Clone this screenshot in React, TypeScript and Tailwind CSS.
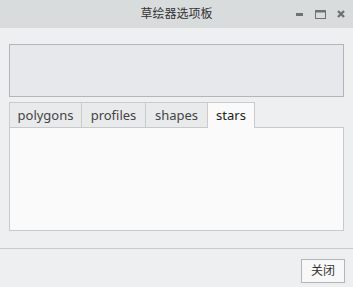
import React from "react";

const font = { fontFamily: '"Noto Sans", "Noto Sans CJK SC", sans-serif' };

export default function App() {
  const tabs = ["polygons", "profiles", "shapes", "stars"];
  return (
    <div className="w-[353px] h-[287px] flex flex-col bg-[#eeeff1] text-[#333]" style={font}>
      <div className="relative h-[28px] bg-[#d9dcdd] flex items-center justify-center shrink-0">
        <span className="text-[12px] text-[#333]">草绘器选项板</span>
        <div className="absolute right-[8px] top-0 h-[28px] flex items-center gap-[11px]">
          <svg width="8" height="9" viewBox="0 0 8 9">
            <rect x="0" y="3" width="7" height="3" fill="#6f7274" />
          </svg>
          <svg width="11" height="9" viewBox="0 0 11 9">
            <rect x="0.5" y="0.5" width="10" height="8" fill="none" stroke="#6f7274" />
            <rect x="0.5" y="0.5" width="10" height="2" fill="#6f7274" />
          </svg>
          <svg width="8" height="8" viewBox="0 0 8 8">
            <path d="M1 1 L7 7 M7 1 L1 7" stroke="#6f7274" strokeWidth="2.4" />
          </svg>
        </div>
      </div>
      <div className="flex flex-col px-[9px] pt-[16px]">
        <div className="h-[53px] border border-[#b4b5b7] bg-[#e7e8eb]" />
        <div className="flex mt-[5px] h-[25px]">
          {tabs.map((t, i) => {
            const active = i === 3;
            const w = [73, 64, 62, 47][i];
            return (
              <div
                key={t}
                style={{ width: w }}
                className={
                  "flex items-center justify-center pt-[1px] text-[13px] border-t border-r border-[#cbcbcb] " +
                  (i === 0 ? "border-l " : "") +
                  (active ? "bg-[#fafafa] text-[#222] h-[26px] -mb-[1px] z-10" : "bg-[#e9eaec] text-[#444]")
                }
              >
                {t}
              </div>
            );
          })}
        </div>
        <div className="h-[104px] border border-[#c8c9ca] bg-[#fafafa]" />
      </div>
      <div className="mt-[17px] h-px bg-[#c9cacc]" />
      <div className="flex justify-end pr-[8px] pt-[10px]">
        <button className="w-[44px] h-[24px] border border-[#b4b5b7] bg-[#f8f8f8] text-[12px] text-[#333] flex items-center justify-center">
          关闭
        </button>
      </div>
    </div>
  );
}
